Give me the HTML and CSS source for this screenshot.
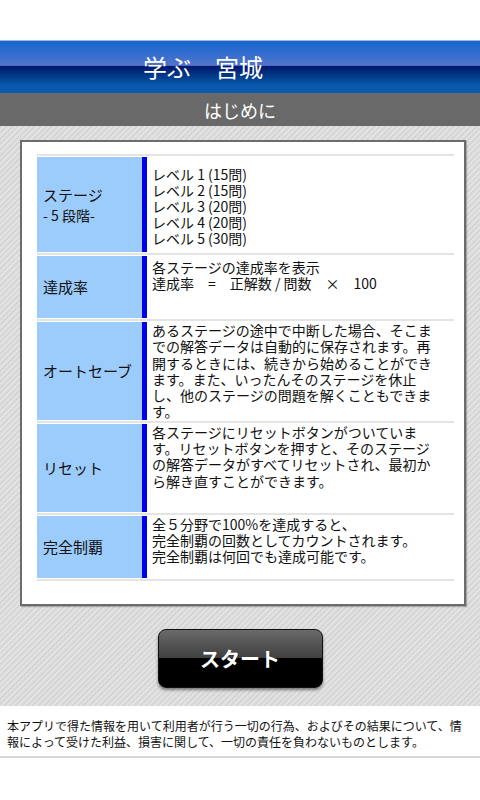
FILE: index.html
```html
<!DOCTYPE html>
<html lang="ja">
<head>
<meta charset="utf-8">
<title>学ぶ　宮城</title>
<link rel="stylesheet" href="styles.css">
</head>
<body>
<div class="topgap"></div>
<header class="header"><h1 class="title">学ぶ　宮城</h1></header>
<div class="subheader">はじめに</div>
<main class="main">
  <section class="panel">
    <div class="list">
      <div class="row row-stage">
        <div class="label"><div>ステージ</div><div class="sublabel">- 5 段階-</div></div>
        <div class="bar"></div>
        <div class="desc desc-stage">レベル 1 (15問)<br>レベル 2 (15問)<br>レベル 3 (20問)<br>レベル 4 (20問)<br>レベル 5 (30問)</div>
      </div>
      <div class="row row-rate">
        <div class="label">達成率</div>
        <div class="bar"></div>
        <div class="desc desc-rate">各ステージの達成率を表示<br>達成率　=　正解数 / 問数　×　100</div>
      </div>
      <div class="row row-save">
        <div class="label">オートセーブ</div>
        <div class="bar"></div>
        <div class="desc">あるステージの途中で中断した場合、そこまでの解答データは自動的に保存されます。再開するときには、続きから始めることができます。また、いったんそのステージを休止し、他のステージの問題を解くこともできます。</div>
      </div>
      <div class="row row-reset">
        <div class="label">リセット</div>
        <div class="bar"></div>
        <div class="desc">各ステージにリセットボタンがついています。リセットボタンを押すと、そのステージの解答データがすべてリセットされ、最初から解き直すことができます。</div>
      </div>
      <div class="row row-full">
        <div class="label">完全制覇</div>
        <div class="bar"></div>
        <div class="desc">全５分野で100%を達成すると、<br>完全制覇の回数としてカウントされます。<br>完全制覇は何回でも達成可能です。</div>
      </div>
    </div>
  </section>
  <div class="actions"><button class="start">スタート</button></div>
</main>
<footer class="footer">本アプリで得た情報を用いて利用者が行う一切の行為、およびその結果について、情報によって受けた利益、損害に関して、一切の責任を負わないものとします。</footer>
</body>
</html>
```

FILE: styles.css
```css
html, body {
  margin: 0;
  padding: 0;
  background: #ffffff;
  font-family: "Noto Sans CJK JP", "DejaVu Sans", sans-serif;
  color: #111111;
}

.topgap {
  height: 40px;
  border-bottom: 1px solid #9fb8d8;
}

.header {
  height: 52px;
  background: linear-gradient(to bottom,
    #1466d0 0%, #3a6fcd 30%, #5474c9 47%,
    #00166c 48%, #02307e 62%, #0758ac 85%, #0a5cae 100%);
  display: flex;
  align-items: center;
}

.title {
  margin: 0;
  padding-left: 143px;
  font-size: 24px;
  font-weight: normal;
  color: #ffffff;
  line-height: 1;
}

.subheader {
  height: 33px;
  background: #696969;
  color: #ffffff;
  font-size: 18px;
  display: flex;
  align-items: center;
  justify-content: center;
}

.main {
  background: repeating-linear-gradient(135deg, #d6d6d6 0px, #d6d6d6 2px, #e2e2e2 2px, #e2e2e2 4px);
  padding: 14px 14px 18px 20px;
}

.panel {
  background: #ffffff;
  border: 2px solid #6c6c6c;
  box-shadow: 1px 1px 1px rgba(0, 0, 0, 0.25);
  padding: 12px 10px 23px 15px;
}

.list {
  border-top: 2px solid #e4e4e4;
}

.row {
  display: flex;
  padding: 1px 0;
  border-bottom: 2px solid #e4e4e4;
}

.row-stage { min-height: 95px; }
.row-rate { min-height: 62px; }
.row-save { min-height: 97px; }
.row-reset { min-height: 88px; }
.row-full { min-height: 62px; }

.label {
  width: 105px;
  flex: none;
  background: #9cccfc;
  font-size: 15px;
  padding-left: 6px;
  box-sizing: border-box;
  display: flex;
  flex-direction: column;
  justify-content: center;
  line-height: 20px;
}

.sublabel {
  font-size: 14px;
}

.bar {
  width: 5px;
  flex: none;
  background: #0000ea;
}

.desc {
  flex: 1;
  font-size: 14px;
  line-height: 16.3px;
  padding: 0 16px 0 5px;
  line-break: strict;
}

.desc-stage { padding-top: 9px; line-height: 16px; }
.desc-rate { padding-top: 3px; }

.actions {
  display: flex;
  justify-content: center;
  padding-top: 23px;
  margin-left: -6px;
}

.start {
  width: 165px;
  height: 59px;
  border: 1px solid #111111;
  border-radius: 8px;
  background: linear-gradient(to bottom, #6a6a6a 0%, #505050 30%, #404040 49%, #000000 50%, #000000 100%);
  box-shadow: 0 2px 3px rgba(0, 0, 0, 0.45);
  color: #ffffff;
  font-family: "Noto Sans CJK JP", "DejaVu Sans", sans-serif;
  font-size: 20px;
  font-weight: bold;
  padding: 0;
}

.footer {
  background: #ffffff;
  font-size: 12px;
  line-height: 16px;
  padding: 12px 10px 6px 7px;
  border-bottom: 2px solid #d6d6d6;
}
```
